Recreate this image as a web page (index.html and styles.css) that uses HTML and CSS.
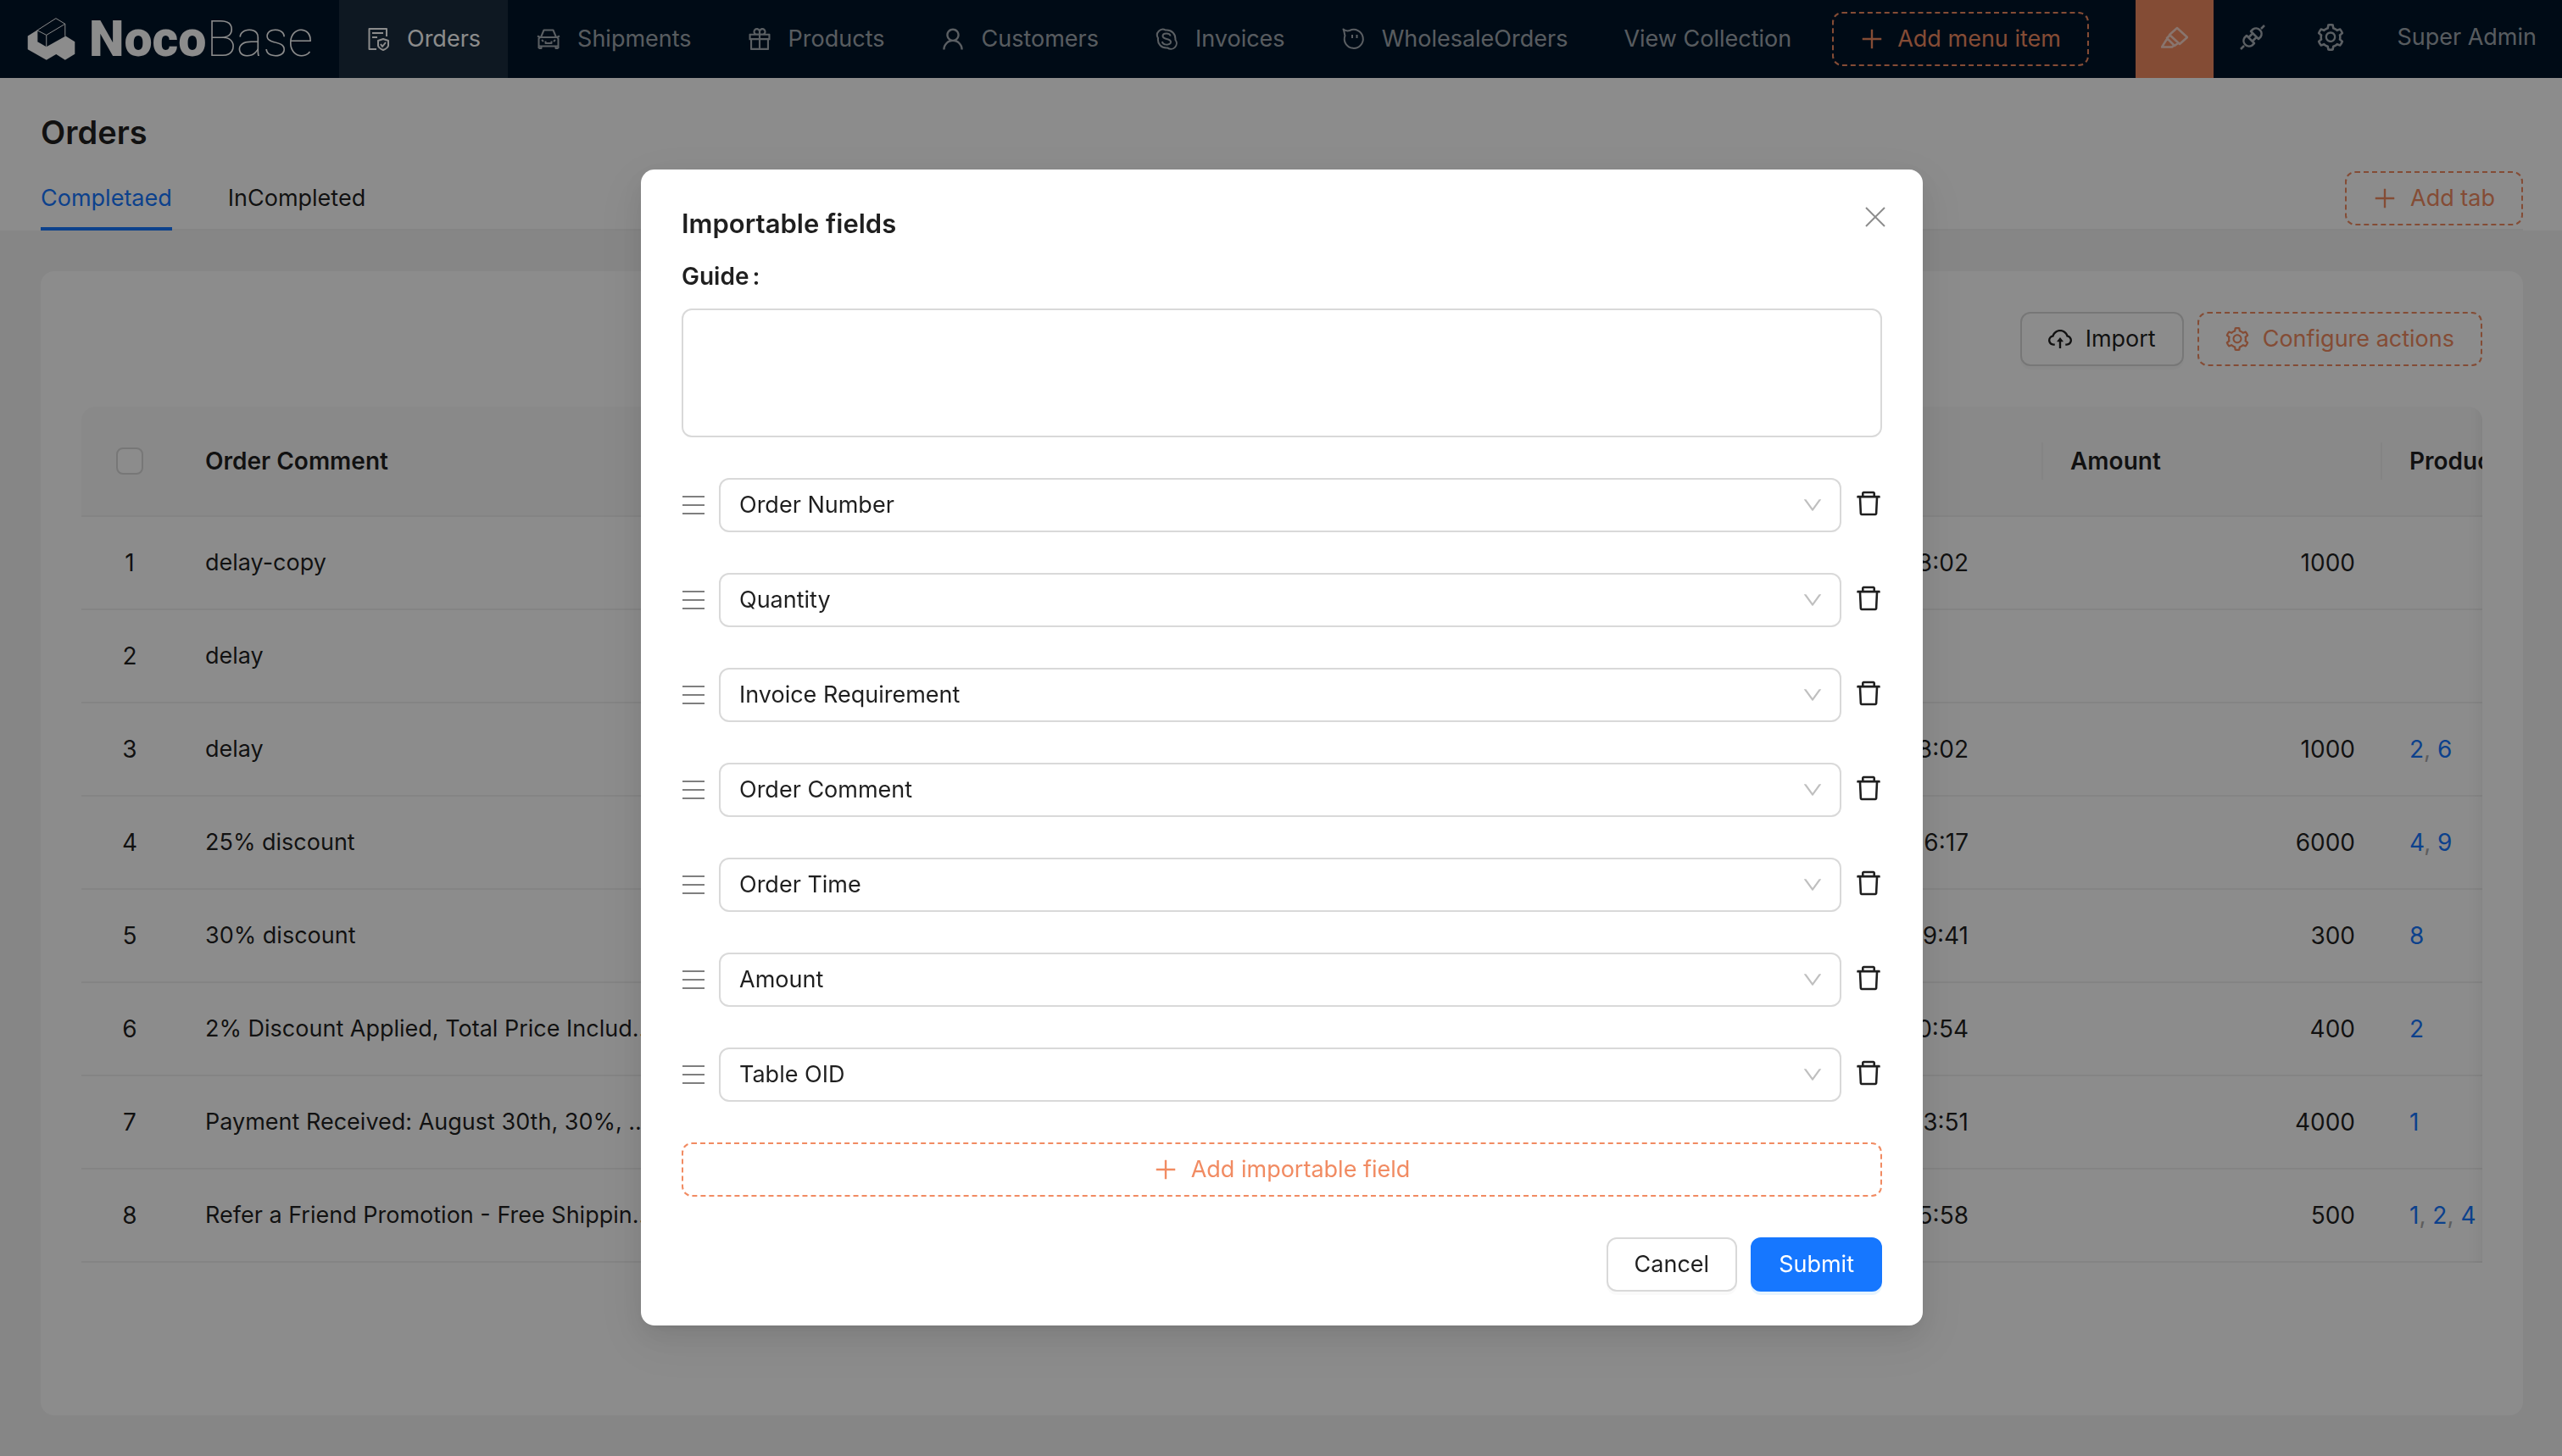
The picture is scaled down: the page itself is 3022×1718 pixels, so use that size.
FILE: index.html
```html
<!DOCTYPE html>
<html lang="en">
<head>
<meta charset="utf-8">
<meta name="viewport" content="width=device-width, initial-scale=1">
<title>Orders - NocoBase</title>
<link rel="stylesheet" href="styles.css">
</head>
<body>
<svg class="sprite" aria-hidden="true">
  <symbol id="i-plus" viewBox="64 64 896 896"><path d="M482 152h60q8 0 8 8v704q0 8-8 8h-60q-8 0-8-8V160q0-8 8-8z"/><path d="M160 474h704q8 0 8 8v60q0 8-8 8H160q-8 0-8-8v-60q0-8 8-8z"/></symbol>
  <symbol id="i-user" viewBox="64 64 896 896"><path d="M858.5 763.6a374 374 0 00-80.6-119.5 375.63 375.63 0 00-119.5-80.6c-.4-.2-.8-.3-1.2-.5C719.5 518 760 444.7 760 362c0-137-111-248-248-248S264 225 264 362c0 82.7 40.5 156 102.8 201.1-.4.2-.8.3-1.2.5-44.8 18.9-85 46-119.5 80.6a375.63 375.63 0 00-80.6 119.5A371.7 371.7 0 00136 901.8a8 8 0 008 8.2h60c4.4 0 7.9-3.5 8-7.8 2-77.2 33-149.5 87.8-204.3 56.7-56.7 132-87.9 212.2-87.9s155.5 31.2 212.2 87.9C779 752.7 810 825 812 902.2c.1 4.4 3.6 7.8 8 7.8h60a8 8 0 008-8.2c-1-47.8-10.9-94.3-29.5-138.2zM512 534c-45.9 0-89.1-17.9-121.6-50.4S340 407.9 340 362c0-45.9 17.9-89.1 50.4-121.6S466.1 190 512 190s89.1 17.9 121.6 50.4S684 316.1 684 362c0 45.9-17.9 89.1-50.4 121.6S557.9 534 512 534z"/></symbol>
  <symbol id="i-gift" viewBox="64 64 896 896"><path d="M880 310H732.4c13.6-21.4 21.6-46.8 21.6-74 0-76.1-61.9-138-138-138-41.4 0-78.7 18.4-104 47.4-25.3-29-62.6-47.4-104-47.4-76.1 0-138 61.9-138 138 0 27.2 7.9 52.6 21.6 74H144c-17.7 0-32 14.3-32 32v200c0 4.4 3.6 8 8 8h40v344c0 17.7 14.3 32 32 32h640c17.7 0 32-14.3 32-32V550h40c4.4 0 8-3.6 8-8V342c0-17.7-14.3-32-32-32zm-334-74c0-38.6 31.4-70 70-70s70 31.4 70 70-31.4 70-70 70h-70v-70zm-138-70c38.6 0 70 31.4 70 70v70h-70c-38.6 0-70-31.4-70-70s31.4-70 70-70zM180 482V378h298v104H180zm48 68h250v308H228V550zm568 308H546V550h250v308zm48-376H546V378h298v104z"/></symbol>
  <symbol id="i-setting" viewBox="64 64 896 896"><path d="M924.8 625.7l-65.5-56c3.1-19 4.7-38.4 4.7-57.8s-1.6-38.8-4.7-57.8l65.5-56a32.03 32.03 0 009.3-35.2l-.9-2.6a443.74 443.74 0 00-79.7-137.9l-1.8-2.1a32.12 32.12 0 00-35.1-9.5l-81.3 28.9c-30-24.6-63.5-44-99.7-57.6l-15.7-85a32.05 32.05 0 00-25.8-25.7l-2.7-.5c-52.1-9.4-106.9-9.4-159 0l-2.7.5a32.05 32.05 0 00-25.8 25.7l-15.8 85.4a351.86 351.86 0 00-99 57.4l-81.9-29.1a32 32 0 00-35.1 9.5l-1.8 2.1a446.02 446.02 0 00-79.7 137.9l-.9 2.6c-4.5 12.5-.8 26.5 9.3 35.2l66.3 56.6c-3.1 18.8-4.6 38-4.6 57.1 0 19.2 1.5 38.4 4.6 57.1L99 625.5a32.03 32.03 0 00-9.3 35.2l.9 2.6c18.1 50.4 44.9 96.9 79.7 137.9l1.8 2.1a32.12 32.12 0 0035.1 9.5l81.9-29.1c29.8 24.5 63.1 43.9 99 57.4l15.8 85.4a32.05 32.05 0 0025.8 25.7l2.7.5a449.4 449.4 0 00159 0l2.7-.5a32.05 32.05 0 0025.8-25.7l15.7-85a350 350 0 0099.7-57.6l81.3 28.9a32 32 0 0035.1-9.5l1.8-2.1c34.8-41.1 61.6-87.5 79.7-137.9l.9-2.6c4.5-12.3.8-26.3-9.3-35zM788.3 465.9c2.5 15.1 3.8 30.6 3.8 46.1s-1.3 31-3.8 46.1l-6.6 40.1 74.7 63.9a370.03 370.03 0 01-42.6 73.6L721 702.8l-31.4 25.8c-23.9 19.6-50.5 35-79.3 45.8l-38.1 14.3-17.9 97a377.5 377.5 0 01-85 0l-17.9-97.2-37.8-14.5c-28.5-10.8-55-26.2-78.7-45.7l-31.4-25.9-93.4 33.2c-17-22.9-31.2-47.6-42.6-73.6l75.5-64.5-6.5-40c-2.4-14.9-3.7-30.3-3.7-45.5 0-15.3 1.2-30.6 3.7-45.5l6.5-40-75.5-64.5c11.3-26.1 25.6-50.7 42.6-73.6l93.4 33.2 31.4-25.9c23.7-19.5 50.2-34.9 78.7-45.7l37.9-14.3 17.9-97.2c28.1-3.2 56.8-3.2 85 0l17.9 97 38.1 14.3c28.7 10.8 55.4 26.2 79.3 45.8l31.4 25.8 92.8-32.9c17 22.9 31.2 47.6 42.6 73.6L781.8 426l6.5 39.9zM512 326c-97.2 0-176 78.8-176 176s78.8 176 176 176 176-78.8 176-176-78.8-176-176-176zm79.2 255.2A111.6 111.6 0 01512 614c-29.9 0-58-11.7-79.2-32.8A111.6 111.6 0 01400 502c0-29.9 11.7-58 32.8-79.2C454 401.6 482.1 390 512 390c29.9 0 58 11.6 79.2 32.8A111.6 111.6 0 01624 502c0 29.9-11.7 58-32.8 79.2z"/></symbol>
  <symbol id="i-upload" viewBox="64 64 896 896"><path d="M518.3 459a8 8 0 00-12.6 0l-112 141.7a7.98 7.98 0 006.3 12.9h73.9V856c0 4.4 3.6 8 8 8h60c4.4 0 8-3.6 8-8V613.7H624c6.7 0 10.4-7.7 6.3-12.9L518.3 459z"/><path d="M811.4 366.7C765.6 245.9 648.9 160 512.2 160S258.8 245.8 213 366.6C127.3 389.1 64 467.2 64 560c0 110.5 89.5 200 199.9 200H304c4.4 0 8-3.6 8-8v-60c0-4.4-3.6-8-8-8h-40.1c-33.7 0-65.4-13.4-89-37.7-23.5-24.2-36-56.8-34.9-90.6.9-26.4 9.9-51.2 26.2-72.1 16.7-21.3 40.1-36.8 66.1-43.7l37.9-9.9 13.9-36.6c8.6-22.8 20.6-44.1 35.7-63.4a245.6 245.6 0 0152.4-49.9c41.1-28.9 89.5-44.2 140-44.2s98.9 15.3 140 44.2c19.9 14 37.5 30.8 52.4 49.9 15.1 19.3 27.1 40.7 35.7 63.4l13.8 36.5 37.8 10C846.1 454.5 884 503.8 884 560c0 33.1-12.9 64.3-36.3 87.7a123.07 123.07 0 01-87.6 36.3H720c-4.4 0-8 3.6-8 8v60c0 4.4 3.6 8 8 8h40.1C870.5 760 960 670.5 960 560c0-92.7-63.1-170.7-148.6-193.3z"/></symbol>
  <symbol id="i-delete" viewBox="64 64 896 896"><path d="M360 184h-8c4.4 0 8-3.6 8-8v8h304v-8c0 4.4 3.6 8 8 8h-8v72h72v-80c0-35.3-28.7-64-64-64H352c-35.3 0-64 28.7-64 64v80h72v-72zm504 72H160c-17.7 0-32 14.3-32 32v32c0 4.4 3.6 8 8 8h60.4l24.7 523c1.6 34.1 29.8 61 63.9 61h454c34.2 0 62.3-26.8 63.9-61l24.7-523H888c4.4 0 8-3.6 8-8v-32c0-17.7-14.3-32-32-32zM731.3 840H292.7l-24.2-512h487l-24.2 512z"/></symbol>
  <symbol id="i-down" viewBox="64 64 896 896"><path d="M884 256h-75c-5.1 0-9.9 2.5-12.9 6.6L512 654.2 227.9 262.6c-3-4.1-7.8-6.6-12.9-6.6h-75c-6.5 0-10.3 7.4-6.5 12.7l352.6 486.1c12.8 17.6 39 17.6 51.7 0l352.6-486.1c3.9-5.3.1-12.7-6.4-12.7z"/></symbol>
  <symbol id="i-menu" viewBox="0 0 28 28"><path d="M1 3h26v2H1zM1 13h26v2H1zM1 23h26v2H1z"/></symbol>
  <symbol id="i-close" viewBox="0 0 28 28"><path class="line" d="M3 3l22 22M25 3L3 25"/></symbol>
  <symbol id="i-file" viewBox="0 0 28 28"><path class="line" d="M24 11V2H3.500V26H12M7 7h13M7 12h6M20 14l6 2v6q-1 3-6 5q-5-2-6-5v-6zM17 20l2 3 4-5"/></symbol>
  <symbol id="i-car" viewBox="0 0 28 28"><path class="line" d="M5 12L8.500 3.500h11L23 12M1 10.500l3 1.500h20l3-1.500M2.500 25V13.500L4 12h20l1.500 1.500V25M2 22.500h24M2.500 25h3v-2M25.500 25h-3v-2M10.500 16.500v2.500h7v-2.500M6 15l2 2M22 15l-2 2"/></symbol>
  <symbol id="i-skype" viewBox="0 0 28 28"><path class="line" d="M4 13A6.700 6.700 0 0 1 13 3.600C20 3 25 8 24.400 15A6.700 6.700 0 0 1 15 24.400C8 25 3 20 4 13z"/><path class="line" d="M18.500 10.500c-.5-4-9-4-9 0 0 4.500 9.500 2.500 9.500 7 0 4.500-10 4-10-.5"/></symbol>
  <symbol id="i-ghost" viewBox="0 0 28 28"><path class="line" d="M2.500 2.500C5 4.500 7.500 4.800 10 4A11 11 0 1 1 4.500 10C3.500 7.500 4 5.500 2.500 2.500zM13 9v4M18.500 9v4"/></symbol>
  <symbol id="i-highlight" viewBox="0 0 32 32"><path class="line bold" d="M19 5l12 11-9 8L10 13zM11 13l-4 4 9 9 4-3M7 18L1 27.500h12l3-2.500"/></symbol>
  <symbol id="i-api" viewBox="0 0 32 32"><path class="line bold" d="M14 9l9 9 2.500-2.500a6.500 6.500 0 0 0-9-9zM26 6l4-4M9 14l9 9-2.500 2.500a6.500 6.500 0 0 1-9-9zM6 26l-4 4M11.500 16l4-4M16 20.500l4-4"/></symbol>
</svg>

<div class="page">
  <header class="topbar">
    <a class="logo" href="#" aria-label="NocoBase">
      <svg class="logo-mark" viewBox="35 32 171 152" aria-hidden="true">
        <path d="M36 97L70 76V117L103 136L172 97L205 118V162L170 183L138 163L103 183L36 145z"/>
        <path class="logo-box" d="M137 34L70 77L103 94L170 54zM103 94V136M170 54V98M70 77V117"/>
      </svg>
      <span class="logo-text"><b>Noco</b><i>Base</i></span>
    </a>
    <nav class="menu">
      <a class="menu-item is-active" href="#"><svg class="icon"><use href="#i-file"/></svg>Orders</a>
      <a class="menu-item" href="#"><svg class="icon"><use href="#i-car"/></svg>Shipments</a>
      <a class="menu-item" href="#"><svg class="icon"><use href="#i-gift"/></svg>Products</a>
      <a class="menu-item" href="#"><svg class="icon"><use href="#i-user"/></svg>Customers</a>
      <a class="menu-item" href="#"><svg class="icon"><use href="#i-skype"/></svg>Invoices</a>
      <a class="menu-item" href="#"><svg class="icon"><use href="#i-ghost"/></svg>WholesaleOrders</a>
      <a class="menu-item" href="#">View Collection</a>
      <button class="btn btn-designer menu-add" type="button"><svg class="icon"><use href="#i-plus"/></svg>Add menu item</button>
    </nav>
    <div class="tools">
      <button class="tool is-on" type="button" aria-label="UI editor"><svg class="icon icon-lg"><use href="#i-highlight"/></svg></button>
      <button class="tool" type="button" aria-label="Plugins"><svg class="icon icon-lg"><use href="#i-api"/></svg></button>
      <button class="tool" type="button" aria-label="Settings"><svg class="icon icon-lg"><use href="#i-setting"/></svg></button>
      <a class="user" href="#">Super Admin</a>
    </div>
  </header>

  <section class="page-head">
    <h1 class="page-title">Orders</h1>
    <div class="tabs">
      <a class="tab is-active" href="#">Completaed</a>
      <a class="tab" href="#">InCompleted</a>
      <button class="btn btn-designer tab-add" type="button"><svg class="icon"><use href="#i-plus"/></svg>Add tab</button>
    </div>
  </section>

  <main class="content">
    <section class="card">
      <div class="actions">
        <button class="btn" type="button"><svg class="icon"><use href="#i-upload"/></svg>Import</button>
        <button class="btn btn-designer" type="button"><svg class="icon"><use href="#i-setting"/></svg>Configure actions</button>
      </div>
      <div class="table-wrap">
        <table class="table">
          <colgroup><col class="col-index"><col class="col-comment"><col class="col-time"><col class="col-std"><col class="col-std"></colgroup>
          <thead>
            <tr><th class="index"><input class="check" type="checkbox" aria-label="Select all"></th><th class="split">Order Comment</th><th class="split"></th><th class="split">Amount</th><th>Products</th></tr>
          </thead>
          <tbody>
            <tr><td class="index">1</td><td>delay-copy</td><td class="time">8:02</td><td class="num">1000</td><td></td></tr>
            <tr><td class="index">2</td><td>delay</td><td></td><td></td><td></td></tr>
            <tr><td class="index">3</td><td>delay</td><td class="time">8:02</td><td class="num">1000</td><td class="refs"><a href="#">2</a>, <a href="#">6</a></td></tr>
            <tr><td class="index">4</td><td>25% discount</td><td class="time">6:17</td><td class="num">6000</td><td class="refs"><a href="#">4</a>, <a href="#">9</a></td></tr>
            <tr><td class="index">5</td><td>30% discount</td><td class="time">9:41</td><td class="num">300</td><td class="refs"><a href="#">8</a></td></tr>
            <tr><td class="index">6</td><td>2% Discount Applied, Total Price Includ...</td><td class="time">0:54</td><td class="num">400</td><td class="refs"><a href="#">2</a></td></tr>
            <tr><td class="index">7</td><td>Payment Received: August 30th, 30%, ...</td><td class="time">3:51</td><td class="num">4000</td><td class="refs"><a href="#">1</a></td></tr>
            <tr><td class="index">8</td><td>Refer a Friend Promotion - Free Shippin...</td><td class="time">5:58</td><td class="num">500</td><td class="refs"><a href="#">1</a>, <a href="#">2</a>, <a href="#">4</a></td></tr>
          </tbody>
        </table>
      </div>
    </section>
  </main>
</div>

<div class="mask">
  <form class="modal" role="dialog" aria-modal="true" aria-labelledby="modal-title">
    <button class="close" type="button" aria-label="Close"><svg class="icon"><use href="#i-close"/></svg></button>
    <div class="guide">
      <h2 class="modal-title" id="modal-title">Importable fields</h2>
      <label class="guide-label" for="guide"><span>Guide</span><span>:</span></label>
      <textarea class="textarea" id="guide"></textarea>
    </div>
    <div class="field"><svg class="icon handle"><use href="#i-menu"/></svg><div class="select"><select aria-label="Field 1"><option>Order Number</option></select><svg class="arrow"><use href="#i-down"/></svg></div><button class="remove" type="button" aria-label="Remove"><svg class="icon icon-lg"><use href="#i-delete"/></svg></button></div>
    <div class="field"><svg class="icon handle"><use href="#i-menu"/></svg><div class="select"><select aria-label="Field 2"><option>Quantity</option></select><svg class="arrow"><use href="#i-down"/></svg></div><button class="remove" type="button" aria-label="Remove"><svg class="icon icon-lg"><use href="#i-delete"/></svg></button></div>
    <div class="field"><svg class="icon handle"><use href="#i-menu"/></svg><div class="select"><select aria-label="Field 3"><option>Invoice Requirement</option></select><svg class="arrow"><use href="#i-down"/></svg></div><button class="remove" type="button" aria-label="Remove"><svg class="icon icon-lg"><use href="#i-delete"/></svg></button></div>
    <div class="field"><svg class="icon handle"><use href="#i-menu"/></svg><div class="select"><select aria-label="Field 4"><option>Order Comment</option></select><svg class="arrow"><use href="#i-down"/></svg></div><button class="remove" type="button" aria-label="Remove"><svg class="icon icon-lg"><use href="#i-delete"/></svg></button></div>
    <div class="field"><svg class="icon handle"><use href="#i-menu"/></svg><div class="select"><select aria-label="Field 5"><option>Order Time</option></select><svg class="arrow"><use href="#i-down"/></svg></div><button class="remove" type="button" aria-label="Remove"><svg class="icon icon-lg"><use href="#i-delete"/></svg></button></div>
    <div class="field"><svg class="icon handle"><use href="#i-menu"/></svg><div class="select"><select aria-label="Field 6"><option>Amount</option></select><svg class="arrow"><use href="#i-down"/></svg></div><button class="remove" type="button" aria-label="Remove"><svg class="icon icon-lg"><use href="#i-delete"/></svg></button></div>
    <div class="field"><svg class="icon handle"><use href="#i-menu"/></svg><div class="select"><select aria-label="Field 7"><option>Table OID</option></select><svg class="arrow"><use href="#i-down"/></svg></div><button class="remove" type="button" aria-label="Remove"><svg class="icon icon-lg"><use href="#i-delete"/></svg></button></div>
    <button class="btn btn-designer" type="button"><svg class="icon"><use href="#i-plus"/></svg>Add importable field</button>
    <div class="footer">
      <button class="btn" type="button">Cancel</button>
      <button class="btn btn-primary" type="submit">Submit</button>
    </div>
  </form>
</div>
</body>
</html>
```
FILE: styles.css
```css
:root {
  --text: rgba(0, 0, 0, 0.88);
  --muted: rgba(0, 0, 0, 0.45);
  --line: rgba(5, 5, 5, 0.06);
  --border: #d9d9d9;
  --primary: #1677ff;
  --designer: #f18b62;
  --nav: #001529;
}

* { box-sizing: border-box; }

body {
  margin: 0;
  background: #f5f5f5;
  color: var(--text);
  font-family: Inter, "Liberation Sans", sans-serif;
  font-size: 27px;
  line-height: 44px;
}

a { color: inherit; text-decoration: none; }
button, select, textarea { font: inherit; color: inherit; }
button { cursor: pointer; }

.sprite { display: none; }
.icon { flex: none; width: 28px; height: 28px; fill: currentColor; }
.icon-lg { width: 32px; height: 32px; }
.line { fill: none; stroke: currentColor; stroke-width: 2; stroke-linejoin: round; }
.bold { stroke-width: 2.5; }

/* Buttons */
.btn {
  display: inline-flex;
  align-items: center;
  justify-content: center;
  gap: 16px;
  height: 64px;
  padding: 0 31px;
  border: 2px solid var(--border);
  border-radius: 12px;
  background: #fff;
  box-shadow: 0 4px 0 rgba(0, 0, 0, 0.02);
  white-space: nowrap;
}
.btn-designer {
  border: 2px dashed var(--designer);
  background: transparent;
  box-shadow: none;
  color: var(--designer);
}
.btn-primary {
  border-color: var(--primary);
  background: var(--primary);
  box-shadow: 0 4px 0 rgba(5, 145, 255, 0.1);
  color: #fff;
}

/* Top bar */
.topbar {
  display: flex;
  height: 92px;
  background: var(--nav);
  color: rgba(255, 255, 255, 0.65);
  white-space: nowrap;
}
.logo {
  display: flex;
  align-items: center;
  gap: 16px;
  flex: none;
  width: 400px;
  padding-left: 32px;
  color: #fff;
}
.logo-mark { width: 57px; height: 50px; fill: currentColor; }
.logo-box { fill: var(--nav); stroke: currentColor; stroke-width: 3; stroke-linejoin: round; }
.logo-text { font: 59px/64px Roboto, sans-serif; }
.logo-text b { font-weight: 900; }
.logo-text i { font-style: normal; font-weight: 100; }
.menu { display: flex; flex: 1; align-items: center; gap: 2px; }
.menu-item {
  display: flex;
  align-items: center;
  gap: 20px;
  height: 92px;
  padding: 0 32px;
}
.menu-item.is-active { background: rgba(255, 255, 255, 0.1); color: #fff; }
.menu-add { margin-left: 14px; }
.tools { display: flex; flex: none; padding-right: 30px; }
.tool {
  display: flex;
  align-items: center;
  justify-content: center;
  width: 92px;
  padding: 0 0 4px;
  border: 0;
  background: none;
}
.tool.is-on { background: var(--designer); }
.user { padding-left: 32px; line-height: 88px; }

/* Page heading and tabs */
.page-head { padding: 32px 46px 0 48px; background: #fff; }
.page-title { margin: 0 0 8px; font-size: 38px; font-weight: 600; line-height: 64px; }
.tabs {
  display: flex;
  align-items: center;
  gap: 66px;
  height: 76px;
  box-shadow: inset 0 -2px 0 var(--line);
}
.tab { padding: 16px 0; line-height: 44px; }
.tab.is-active { color: var(--primary); box-shadow: inset 0 -4px 0 var(--primary); }
.tab-add { margin-left: auto; }

/* Table card */
.content { padding: 48px 46px 48px 48px; }
.card { padding: 48px 48px 180px; border-radius: 16px; background: #fff; }
.actions { display: flex; justify-content: flex-end; gap: 16px; margin-bottom: 48px; }
.table-wrap { position: relative; overflow: hidden; border-radius: 16px 16px 0 0; }
.table-wrap::after {
  content: "";
  position: absolute;
  inset: 0 0 0 auto;
  width: 60px;
  box-shadow: inset -20px 0 16px -16px rgba(5, 5, 5, 0.06);
}
.table { width: 3114px; table-layout: fixed; border-collapse: separate; border-spacing: 0; }
.col-index { width: 114px; }
.col-comment { width: 600px; }
.col-time { width: 1600px; }
.col-std { width: 400px; }
.table th, .table td { padding: 0 32px; border-bottom: 2px solid #f0f0f0; text-align: left; white-space: nowrap; }
.table th { height: 130px; background: #fafafa; font-size: 28px; font-weight: 600; }
.table th.split { background: linear-gradient(#f0f0f0, #f0f0f0) right center / 2px 44px no-repeat #fafafa; }
.table td { height: 110px; }
.table .index { text-align: center; }
.table .num { text-align: right; }
.table .time { padding-right: 88px; text-align: right; }
.table .index, .table .num, .table .time, .table .refs { font-size: 28px; }
.check {
  display: block;
  width: 32px;
  height: 32px;
  margin: 0 auto;
  border: 2px solid var(--border);
  border-radius: 8px;
  background: #fff;
  appearance: none;
}
.refs { color: #aaa; }
.refs a { color: var(--primary); }

/* Modal */
.mask {
  position: fixed;
  inset: 0;
  overflow: auto;
  padding: 200px 0 48px 2px;
  background: rgba(0, 0, 0, 0.45);
}
.modal {
  position: relative;
  display: flex;
  flex-direction: column;
  gap: 48px;
  max-width: 1512px;
  margin: 0 auto;
  padding: 40px 48px;
  border-radius: 16px;
  background: #fff;
  box-shadow: 0 12px 32px rgba(0, 0, 0, 0.08), 0 6px 12px -8px rgba(0, 0, 0, 0.12), 0 18px 56px 16px rgba(0, 0, 0, 0.05);
}
.close {
  position: absolute;
  top: 34px;
  right: 34px;
  display: flex;
  align-items: center;
  justify-content: center;
  width: 44px;
  height: 44px;
  padding: 0;
  border: 0;
  background: none;
  color: var(--muted);
}
.guide { display: flex; flex-direction: column; gap: 16px; }
.modal-title { margin: 0; font-size: 31px; font-weight: 600; line-height: 48px; }
.guide-label { display: flex; gap: 4px; font-size: 28px; font-weight: 600; }
.textarea {
  height: 152px;
  padding: 8px 22px;
  border: 2px solid var(--border);
  border-radius: 12px;
  background: #fff;
  resize: none;
}
.field { display: flex; align-items: center; gap: 16px; height: 64px; }
.handle { color: rgba(0, 0, 0, 0.5); }
.select { position: relative; flex: 1; }
.select select {
  display: block;
  width: 100%;
  height: 64px;
  padding: 0 60px 0 22px;
  border: 2px solid var(--border);
  border-radius: 12px;
  background: #fff;
  appearance: none;
}
.arrow {
  position: absolute;
  top: 20px;
  right: 22px;
  width: 24px;
  height: 24px;
  fill: rgba(0, 0, 0, 0.25);
  pointer-events: none;
}
.remove { display: flex; padding: 0 0 4px; border: 0; background: none; }
.footer { display: flex; justify-content: flex-end; gap: 16px; }
```
